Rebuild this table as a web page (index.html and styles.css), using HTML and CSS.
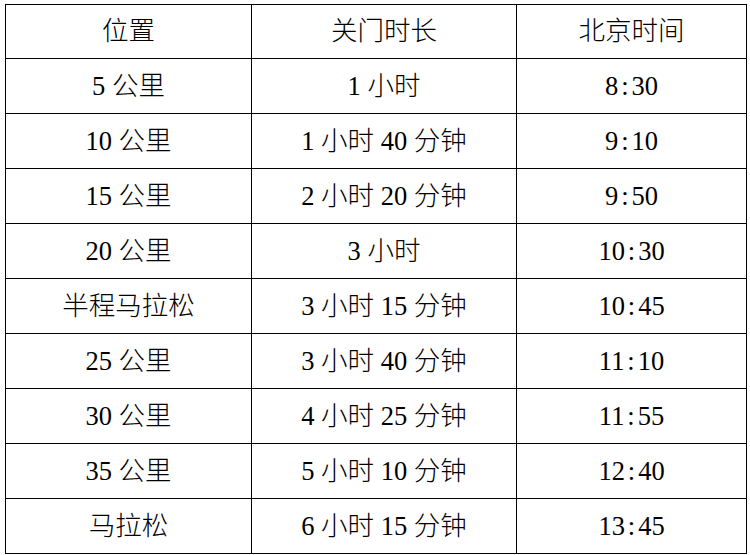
FILE: index.html
```html
<!DOCTYPE html>
<html lang="zh-CN">
<head>
<meta charset="utf-8">
<title>关门时间</title>
<link rel="stylesheet" href="styles.css">
</head>
<body>
<table class="cutoff">
  <colgroup>
    <col class="c1"><col class="c2"><col class="c3">
  </colgroup>
  <thead>
    <tr class="head"><th>位置</th><th>关门时长</th><th>北京时间</th></tr>
  </thead>
  <tbody>
    <tr><td>5 公里</td><td>1 小时</td><td>8<span class="colon">:</span>30</td></tr>
    <tr><td>10 公里</td><td>1 小时 40 分钟</td><td>9<span class="colon">:</span>10</td></tr>
    <tr><td>15 公里</td><td>2 小时 20 分钟</td><td>9<span class="colon">:</span>50</td></tr>
    <tr><td>20 公里</td><td>3 小时</td><td>10<span class="colon">:</span>30</td></tr>
    <tr><td>半程马拉松</td><td>3 小时 15 分钟</td><td>10<span class="colon">:</span>45</td></tr>
    <tr><td>25 公里</td><td>3 小时 40 分钟</td><td>11<span class="colon">:</span>10</td></tr>
    <tr><td>30 公里</td><td>4 小时 25 分钟</td><td>11<span class="colon">:</span>55</td></tr>
    <tr><td>35 公里</td><td>5 小时 10 分钟</td><td>12<span class="colon">:</span>40</td></tr>
    <tr><td>马拉松</td><td>6 小时 15 分钟</td><td>13<span class="colon">:</span>45</td></tr>
  </tbody>
</table>
</body>
</html>
```
FILE: styles.css
```css
html, body {
  margin: 0;
  padding: 0;
  background: #fff;
}
body {
  font-family: "Liberation Serif", "Noto Sans CJK SC", serif;
  color: #000;
}
.cutoff {
  margin: 4px 0 0 5px;
  border-collapse: collapse;
  table-layout: fixed;
  width: 741px;
}
.c1 { width: 246px; }
.c2 { width: 265px; }
.c3 { width: 230px; }
.cutoff th,
.cutoff td {
  border: 1.5px solid #000;
  height: 54px;
  padding: 0;
  text-align: center;
  vertical-align: middle;
  font-size: 26.5px;
  font-weight: 300;
  line-height: 1;
}
.cutoff .head th {
  height: 53px;
}
.colon {
  display: inline-block;
  width: 0.5em;
  text-align: center;
}
```
